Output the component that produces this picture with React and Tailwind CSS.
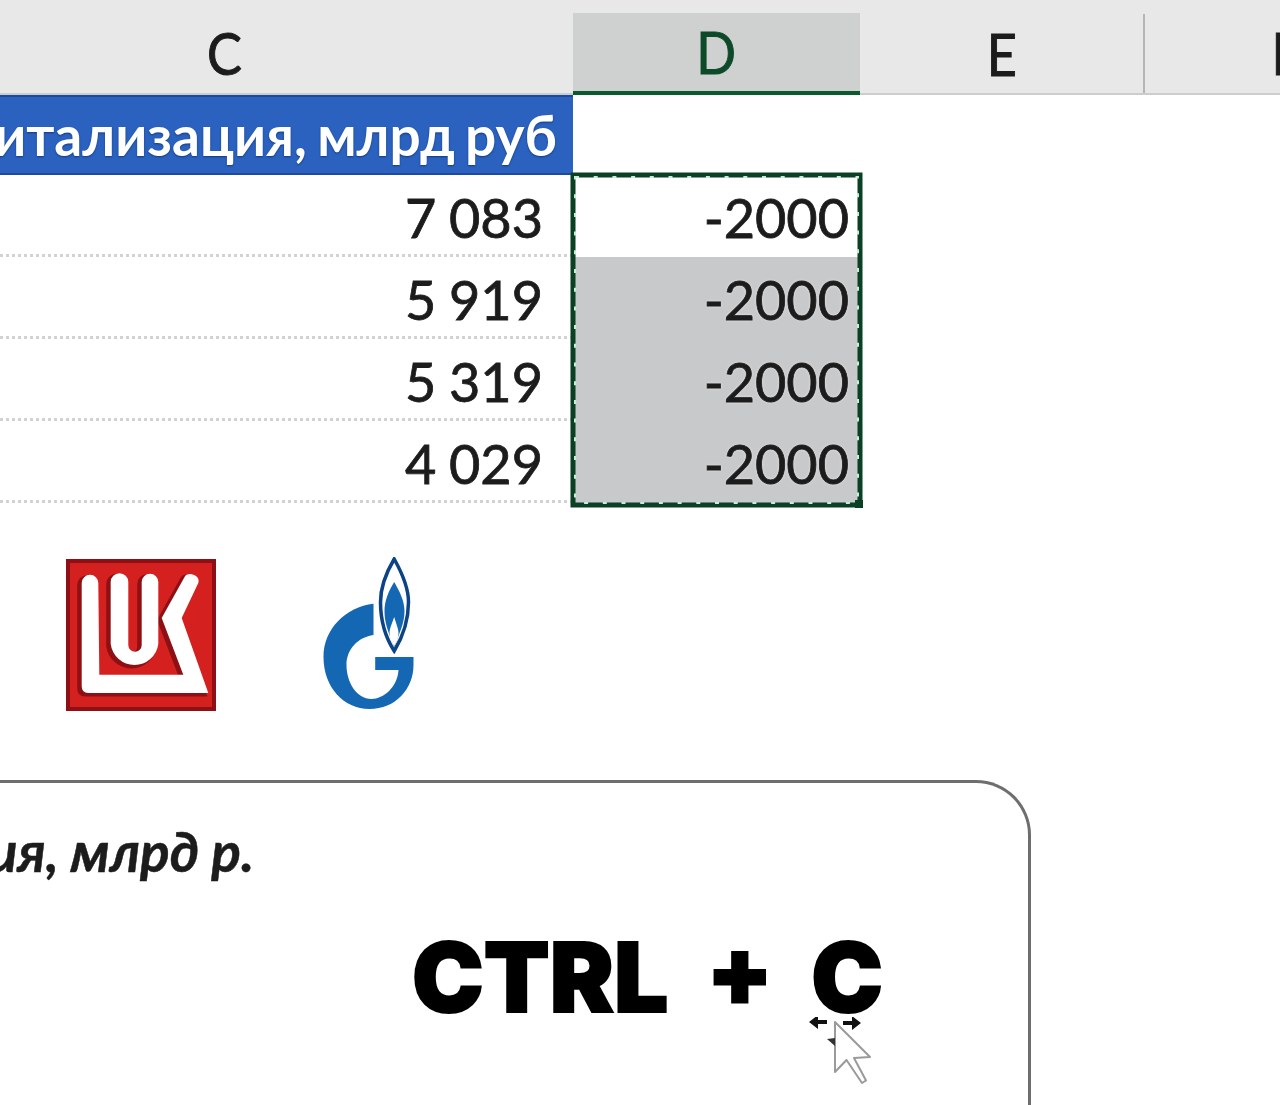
import React from 'react';

const rows = [
  { cap: '7 083', diff: '-2000', copied: false },
  { cap: '5 919', diff: '-2000', copied: true },
  { cap: '5 319', diff: '-2000', copied: true },
  { cap: '4 029', diff: '-2000', copied: true },
];

const LukoilLogo = () => (
  <svg width="150" height="152" viewBox="0 0 150 152" className="mt-[2px] shrink-0 blur-[0.5px]">
    <rect width="150" height="152" fill="#8f1014" />
    <rect x="4" y="4" width="142" height="144" fill="#d4211f" />
    <g fill="#8f1014" transform="translate(-3 2)" stroke="#8f1014" strokeWidth="3">
      <path d="M15.7 24 A8.3 8.3 0 0 1 32.3 24 L33.3 115.7 H117.3 L95.7 59 L119 17.3 C122 12 135 16 132.3 24 L115.7 59 L142.3 134 H22.3 Q15.7 134 15.7 127.3 Z" />
      <path d="M44.7 23 A8.8 8.8 0 0 1 62.3 23 V86 A6.7 6.7 0 0 0 75.7 86 V23 A8.3 8.3 0 0 1 92.3 23 V85 A24 24 0 0 1 44.7 85 Z" />
    </g>
    <g fill="#ffffff">
      <path d="M15.7 24 A8.3 8.3 0 0 1 32.3 24 L33.3 115.7 H117.3 L95.7 59 L119 17.3 C122 12 135 16 132.3 24 L115.7 59 L142.3 134 H22.3 Q15.7 134 15.7 127.3 Z" />
      <path d="M44.7 23 A8.8 8.8 0 0 1 62.3 23 V86 A6.7 6.7 0 0 0 75.7 86 V23 A8.3 8.3 0 0 1 92.3 23 V85 A24 24 0 0 1 44.7 85 Z" />
    </g>
  </svg>
);

const GazpromLogo = () => (
  <svg width="93" height="154" viewBox="0 0 90 154" className="ml-[106px] shrink-0 blur-[0.5px]">
    <path d="M70.7 2 C78 15 85 30 85 45 C85 65 78 82 70.7 94 C63 82 57 65 57 45 C57 30 63 15 70.7 2 Z" fill="#ffffff" stroke="#0c4384" strokeWidth="3.5" />
    <path d="M70.7 25 C76 34 81 44 81 54 C81 66 76 76 70.7 90 C65 76 61 66 61 54 C61 44 65 34 70.7 25 Z" fill="#1467b3" />
    <path d="M70.7 60 C73 68 75 72 75 76 C75 81 73 85 70.7 89 C68 85 66 81 66 76 C66 72 68 68 70.7 60 Z" fill="#ffffff" />
    <path d="M50 46.7 C22 50 0 72 0 100 C0 130 20 152 46 152 C72 152 90 132 90 108 V100 H51.7 V113 H75 C74 130 60 142 48 142 C33 142 23 125 23 108 C23 92 35 80 50 78 Z" fill="#1467b3" />
  </svg>
);

const Cursor = () => (
  <svg width="70" height="70" viewBox="0 0 70 70" className="absolute left-[805px] top-[1017px]">
    <path d="M4 5 L13 -2 V3 H22 V7 H13 V12 Z" fill="#111" />
    <path d="M56 6 L47 -1 V4 H38 V8 H47 V13 Z" fill="#111" />
    <path d="M30 5 V55 L41.5 43 L57 66 L61 63.5 L49 41 L65 40 Z" fill="#fff" stroke="#9a9a9a" strokeWidth="2" strokeLinejoin="round" />
    <path d="M22 22 L30 21 V29 Z" fill="#333" />
  </svg>
);

export default function App() {
  return (
    <div className="relative w-[1280px] h-[1105px] overflow-hidden bg-white font-['Lato',sans-serif] text-[#1c1c1c]">
      {/* column headers */}
      <div className="flex h-[95px] bg-[#e8e8e8] border-b-2 border-[#cdcdcd] text-[58px] leading-none [-webkit-text-stroke:1px_#1c1c1c]">
        <div className="flex items-center justify-center w-[698px] ml-[-125px] shrink-0 pt-3">
          <span className="scale-x-90">C</span>
        </div>
        <div className="flex items-center justify-center w-[287px] shrink-0 mt-[13px] mb-[-2px] bg-[#cfd0d0] text-[#0d4a2a] border-b-[4px] border-[#0b5a2f] [-webkit-text-stroke:1px_#0d4a2a]">
          <span className="scale-x-90">D</span>
        </div>
        <div className="flex items-center justify-center w-[285px] shrink-0 mt-[14px] border-r-2 border-[#b5b5b5]">
          <span className="scale-x-90">E</span>
        </div>
        <div className="flex items-center justify-center w-[285px] shrink-0 pt-3">F</div>
      </div>

      <div className="flex">
        <div className="w-[573px] shrink-0">
          <div className="flex items-center justify-end h-[80px] pr-[16px] bg-[#2b62bf] border-y-2 border-[#1c4aa0] text-[55px] font-bold leading-none text-white whitespace-nowrap [word-spacing:-3px] [text-shadow:0_1px_2px_#123a80]">
            Капитализация, млрд руб
          </div>
          {rows.map((row) => (
            <div key={row.cap} className="flex items-center justify-end h-[82px] pt-[6px] pr-[30px] border-b-[3px] border-dotted border-[#d2d2d2] text-[54px] leading-none [word-spacing:-1px] [-webkit-text-stroke:0.8px_#1c1c1c]">
              {row.cap}
            </div>
          ))}
        </div>

        <div className="relative w-[287px] shrink-0">
          <div className="h-[80px]" />
          {rows.map((row, i) => (
            <div
              key={i}
              className={row.copied
                ? 'flex items-center justify-end h-[82px] pt-[3px] pr-[11px] bg-[#c8c9cb] text-[54px] leading-none [-webkit-text-stroke:0.8px_#1c1c1c] [text-shadow:0_0_3px_#f2f2f2]'
                : 'flex items-center justify-end h-[82px] pt-[3px] pr-[11px] text-[54px] leading-none [-webkit-text-stroke:0.8px_#1c1c1c]'}
            >
              {row.diff}
            </div>
          ))}
          {/* copy selection */}
          <svg width="294" height="339" viewBox="0 0 294 339" className="absolute left-[-3px] top-[77px]">
            <rect x="3" y="3" width="287" height="330" fill="none" stroke="#0a4023" strokeWidth="5" />
            <rect x="5" y="5" width="283" height="326" fill="none" stroke="#cdeadb" strokeWidth="2" strokeDasharray="4 14.7" />
            <rect x="285" y="328" width="8" height="8" fill="#0a4023" />
          </svg>
        </div>
      </div>

      <div className="flex items-start pl-[66px] mt-[54px]">
        <LukoilLogo />
        <GazpromLogo />
      </div>

      {/* chart area */}
      <div className="w-[1111px] h-[400px] ml-[-80px] mt-[69px] border-t-[3px] border-r-[3px] border-l-[3px] border-[#6e6e6e] rounded-[55px]">
        <div className="flex justify-end w-[331px] mt-[41px] text-[55px] leading-none font-bold italic whitespace-nowrap [-webkit-text-stroke:0.5px_#1c1c1c]">
          Капитализация, млрд р.
        </div>
        <div className="flex justify-end w-[960px] mt-[50px] font-['Inter',sans-serif] text-[96px] leading-none font-black text-black whitespace-pre [-webkit-text-stroke:2px_#000]">
          CTRL  +  C
        </div>
      </div>

      <Cursor />
    </div>
  );
}
